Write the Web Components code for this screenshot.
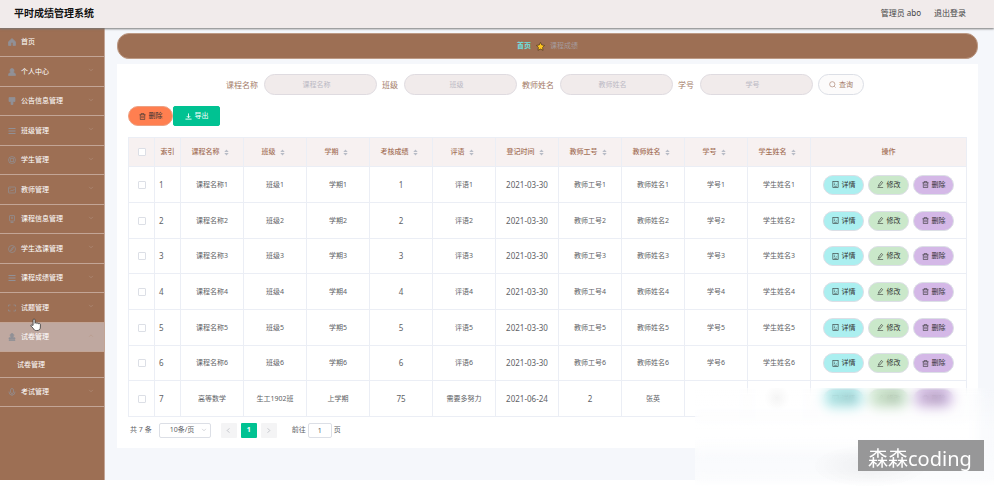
<!DOCTYPE html>
<html lang="zh-CN">
<head>
<meta charset="utf-8">
<title>平时成绩管理系统</title>
<style>
  body { margin: 0; background: #fff; font-family: "Noto Sans", "Noto Sans CJK SC", sans-serif; font-size: 7px; line-height: 10px; color: #606266; }
</style>
</head>
<body>
<score-app></score-app>
<script>
const ICONS = {
  home: '<path fill="currentColor" d="M8 1 1 7.5V15h5v-4.500a2 2 0 0 1 4 0V15h5V7.500z"/>',
  user: '<path fill="currentColor" d="M8 1a4 4 0 0 1 4 4c0 2-1 3.500-2 4.200 3 .5 5 1.600 5 3.800v2H1v-2c0-2.200 2-3.300 5-3.800C5 8.500 4 7 4 5a4 4 0 0 1 4-4z"/>',
  brush: '<path fill="currentColor" d="M2 1h12v8H2zM6 9h4v6H6z"/>',
  menu: '<path d="M1 3h14M1 8h14M1 13h14" stroke-width="2"/>',
  help: '<circle cx="8" cy="8" r="7"/><circle cx="8" cy="8" r="3.500"/><path d="m3 3 2.500 2.500M13 3l-2.500 2.500M3 13l2.500-2.500M13 13l-2.500-2.500"/>',
  card: '<rect x="1" y="2" width="14" height="12" rx="1"/><path d="M3 5h2M4 11l3-3 2 2 4-4"/>',
  phone: '<rect x="3" y="1" width="10" height="11" rx="1"/><path d="M8 3v5M6 6h4M8 12v3M5 15h6"/>',
  compass: '<circle cx="8" cy="8" r="7"/><path d="m11 4-2 5-4 3 2-5z"/>',
  frame: '<path d="M1 5V2h4M11 2h4v3M15 11v3h-4M5 14H1v-3"/>',
  stamp: '<path fill="currentColor" d="M8 1a3.500 3.500 0 0 1 3 5.500c-.8 1-1 2-1 3h4v3H2v-3h4c0-1-.2-2-1-3A3.500 3.500 0 0 1 8 1zM2 14h12v1H2z"/>',
  mic: '<rect x="5" y="1" width="6" height="10" rx="3"/><path d="M2 7v1a6 6 0 0 0 12 0V7M8 14v2"/>',
  down: '<path d="m3 5 5 5 5-5"/>',
  up: '<path d="m3 10 5-5 5 5"/>',
  left: '<path d="m10 3-5 5 5 5"/>',
  right: '<path d="m6 3 5 5-5 5"/>',
  search: '<circle cx="7.500" cy="7.500" r="6"/><path d="m12 12 3 3"/>',
  trash: '<path d="M1 4h14M5 4V1h6v3M3 4v11h10V4M6.500 7v5M9.500 7v5"/>',
  download: '<path d="M8 1v9M4 7l4 4 4-4M1 14h14" stroke-width="2"/>',
  doc: '<rect x="2" y="1" width="12" height="14"/><path d="M5 5h2M5 8h2M5 12h6M10 8h1"/>',
  edit: '<path d="m4 9 6-8 3 2.500-6 7.500-4 1zM1 15h13"/>',
  star: '<path fill="#ffc61e" stroke="#4a3420" stroke-width="1.200" d="M8 .8 10.300 5.300 15.300 6.100 11.700 9.700 12.500 14.800 8 12.500 3.500 14.800 4.300 9.700 .7 6.100 5.700 5.300z"/>',
  sort: '<path fill="currentColor" stroke="none" d="m8 1 5 6H3zM8 15l5-6H3z"/>',
  hand: '<path fill="#fff" stroke="#333" stroke-width="1" d="M5 9V2.500a1.200 1.200 0 0 1 2.400 0V6.500a1.200 1.200 0 0 1 2.300.3 1.200 1.200 0 0 1 2.200.4 1.200 1.200 0 0 1 2.100.8V11c0 3-1.500 4.500-4.500 4.500-2.500 0-3.500-1-4.500-3L2.500 10c-.6-1.200.8-2 1.700-1z"/>'
};

function define(name, render) {
  customElements.define(name, class extends HTMLElement {
    connectedCallback() {
      if (this.shadowRoot) return;
      const t = document.createElement('template');
      t.innerHTML = render(this);
      this.attachShadow({ mode: 'open' }).append(t.content.cloneNode(true));
    }
  });
}

define('ui-icon', el => `
  <style>:host{display:inline-flex;width:8px;height:8px;flex:none}svg{width:100%;height:100%}</style>
  <svg viewBox="0 0 16 16" fill="none" stroke="currentColor" stroke-width="1.400" aria-hidden="true">${ICONS[el.getAttribute('name')]}</svg>`);

define('app-header', () => `
  <style>
    :host{display:flex;align-items:center;justify-content:space-between;height:28px;padding:0 28px 3px 14px;box-sizing:border-box;background:#f1ebeb;box-shadow:0 1px 2px #777;position:relative;z-index:1}
    h1{margin:0;font-size:10px;line-height:16px;font-weight:700;color:#111}
    div{display:flex;gap:13px;font-size:8px;line-height:12px;color:#444}
    a{color:inherit;text-decoration:none}
  </style>
  <h1>平时成绩管理系统</h1><div><span>管理员 abo</span><a href="#logout">退出登录</a></div>`);

define('nav-item', el => `
  <style>
    :host{display:block;height:29px;box-sizing:border-box;border-bottom:1px solid #c3a596}
    :host(:nth-of-type(even)){height:30px}
    :host([active]){background:#bfa8a0}
    :host([sub]){height:26px}
    a{display:flex;align-items:center;height:100%;gap:5px;padding:0 10px 0 8px;color:#fff;text-decoration:none}
    :host([sub]) a{padding-left:17px}
    span{flex:1}
    ui-icon{color:#919096}
    .arrow{width:6px;height:6px;color:#b69584;margin-bottom:3px}
  </style>
  <a href="#menu">${el.hasAttribute('icon') ? `<ui-icon name="${el.getAttribute('icon')}"></ui-icon>` : ''}<span><slot></slot></span>
  ${el.hasAttribute('arrow') ? `<ui-icon class="arrow" name="${el.getAttribute('arrow')}"></ui-icon>` : ''}</a>`);

define('side-nav', () => `
  <style>
    :host{display:block;width:105px;flex:none;box-sizing:border-box;background:#9d6f54;border-right:1px solid #c3a596;position:relative}
    .pointer{position:absolute;left:29px;top:290px;width:13px;height:13px}
  </style>
  <nav>
    <nav-item icon="home">首页</nav-item>
    <nav-item icon="user" arrow="down">个人中心</nav-item>
    <nav-item icon="brush" arrow="down">公告信息管理</nav-item>
    <nav-item icon="menu" arrow="down">班级管理</nav-item>
    <nav-item icon="help" arrow="down">学生管理</nav-item>
    <nav-item icon="card" arrow="down">教师管理</nav-item>
    <nav-item icon="phone" arrow="down">课程信息管理</nav-item>
    <nav-item icon="compass" arrow="down">学生选课管理</nav-item>
    <nav-item icon="menu" arrow="down">课程成绩管理</nav-item>
    <nav-item icon="frame" arrow="down">试题管理</nav-item>
    <nav-item icon="stamp" arrow="up" active>试卷管理</nav-item>
    <nav-item sub>试卷管理</nav-item>
    <nav-item icon="mic" arrow="down">考试管理</nav-item>
  </nav>
  <ui-icon class="pointer" name="hand"></ui-icon>`);

define('bread-crumb', () => `
  <style>
    :host{display:flex;align-items:center;justify-content:center;gap:5px;height:26px;box-sizing:border-box;border:1px solid #bd9a85;border-radius:12px;background:#9d6f54;color:#a59b9d}
    a{color:#6ee0e0;font-weight:700;text-decoration:none}
    ui-icon{width:9px;height:9px}
  </style>
  <a href="#home">首页</a><ui-icon name="star"></ui-icon><span>课程成绩</span>`);

define('search-field', el => `
  <style>
    :host{display:flex;align-items:center;gap:6px}
    label{font-size:8px;line-height:12px;color:#a47c68}
    input{width:113px;height:21px;box-sizing:border-box;border:1px solid #dfdbe0;border-radius:11px;background:#f1ebeb;font:inherit;text-align:center;padding:0 12px 0 4px;outline:0}
    input::placeholder{color:#bbb9c4}
  </style>
  <label for="q">${el.getAttribute('label')}</label><input id="q" type="text" placeholder="${el.getAttribute('label')}">`);

define('icon-button', el => `
  <style>
    :host{display:inline-flex}
    button{display:flex;align-items:center;justify-content:center;gap:3px;height:20px;width:41px;box-sizing:border-box;padding:0;border:1px solid #dcdfe6;border-radius:10px;font:inherit;color:#333;background:#fff}
    ui-icon{width:7px;height:7px}
    :host([kind=find]) button{width:46px;height:21px;border-radius:11px;background:#fcfbfb;color:#a47c68}
    :host([kind=remove]) button{width:45px;border-color:#eda183;background:#ff7f50}
    :host([kind=export]) button{width:47px;border-color:#00c292;border-radius:2px;background:#00c292;color:#fff}
    :host([kind=detail]) button{background:#abeff0}
    :host([kind=edit]) button{background:#cae8ca}
    :host([kind=drop]) button{background:#d4b8e7}
  </style>
  <button type="button"><ui-icon name="${el.getAttribute('icon')}"></ui-icon><slot></slot></button>`);

define('search-bar', () => `
  <style>form{display:flex;justify-content:center;gap:5px;padding-right:5px}</style>
  <form>
    <search-field label="课程名称"></search-field><search-field label="班级"></search-field>
    <search-field label="教师姓名"></search-field><search-field label="学号"></search-field>
    <icon-button kind="find" icon="search">查询</icon-button>
  </form>`);

const HEADS = ['课程名称', '班级', '学期', '考核成绩', '评语', '登记时间', '教师工号', '教师姓名', '学号', '学生姓名'];
const ROWS = [1, 2, 3, 4, 5, 6].map(n => ['课程名称' + n, '班级' + n, '学期' + n, '' + n, '评语' + n, '2021-03-30', '教师工号' + n, '教师姓名' + n, '学号' + n, '学生姓名' + n]);
ROWS.push(['高等数学', '生工1902班', '上学期', '75', '需要多努力', '2021-06-24', '2', '张英', '', '']);
const cell = v => `<td${/^[\d-]+$/.test(v) ? ' class="num"' : ''}>${v}</td>`;

define('score-table', () => `
  <style>
    :host{display:block}
    table{width:100%;table-layout:fixed;border-collapse:separate;border-spacing:0;border:solid #ebeef5;border-width:1px 0 0 1px}
    th,td{padding:0;box-sizing:border-box;border:solid #ebeef5;border-width:0 1px 1px 0;text-align:center;white-space:nowrap}
    th{height:29px;background:#f7f1f1;color:#a47058;font-weight:500}
    td{height:36px}
    tr:nth-child(3n) td{height:35px}
    .slim{width:26px}.ops{width:156px}
    .num{font-size:8px}
    .index{text-align:left;padding-left:4px}
    input{appearance:none;display:block;width:8px;height:8px;margin:0 auto;box-sizing:border-box;border:1px solid #dcdfe6;border-radius:1px;background:#fff}
    .sort{padding:0 3px 0 0;border:0;background:none;font:inherit;color:inherit;display:inline-flex;align-items:center;gap:3px}
    .sort ui-icon{width:7px;height:7px;color:#b8bcc6}
    .buttons{display:flex;justify-content:center;gap:4px}
  </style>
  <table>
    <thead><tr><th class="slim"><input type="checkbox" aria-label="全选"></th><th class="slim">索引</th>
      ${HEADS.map(h => `<th><button class="sort" type="button">${h}<ui-icon name="sort"></ui-icon></button></th>`).join('')}
      <th class="ops">操作</th></tr></thead>
    <tbody>${ROWS.map((r, i) => `<tr><td><input type="checkbox" aria-label="选择第${i + 1}行"></td><td class="num index">${i + 1}</td>${r.map(cell).join('')}
      <td><div class="buttons"><icon-button kind="detail" icon="doc">详情</icon-button><icon-button kind="edit" icon="edit">修改</icon-button><icon-button kind="drop" icon="trash">删除</icon-button></div></td></tr>`).join('')}</tbody>
  </table>`);

define('page-bar', () => `
  <style>
    :host{display:flex;align-items:center;padding:0 2px;height:16px}
    .size{position:relative;display:flex;align-items:center;margin:0 10px 0 7px}
    select{appearance:none;width:52px;height:15px;box-sizing:border-box;padding:0 0 0 10px;border:1px solid #dcdfe6;border-radius:2px;background:#fff;font:inherit;color:inherit}
    .size ui-icon{position:absolute;right:4px;width:6px;height:6px;color:#b0b4bc}
    .pages{display:flex;gap:4px;margin-right:15px}
    button{display:flex;align-items:center;justify-content:center;width:16px;height:15px;padding:0;border:0;border-radius:1px;background:#f4f4f5;color:#a4a8b0;font:inherit;font-weight:700}
    button ui-icon{width:7px;height:7px}
    .on{background:#00c292;color:#fff}
    label{display:flex;align-items:center;gap:2px}
    input{width:24px;height:15px;box-sizing:border-box;border:1px solid #dcdfe6;border-radius:2px;padding:0;text-align:center;font:inherit;color:inherit}
  </style>
  <span>共 7 条</span>
  <div class="size"><select aria-label="每页条数"><option>10条/页</option></select><ui-icon name="down"></ui-icon></div>
  <div class="pages"><button type="button" aria-label="上一页"><ui-icon name="left"></ui-icon></button><button class="on" type="button">1</button><button type="button" aria-label="下一页"><ui-icon name="right"></ui-icon></button></div>
  <label>前往<input type="text" value="1">页</label>`);

define('frosted-corner', () => `
  <style>
    :host{position:absolute;right:0;bottom:0;width:299px;height:98px;z-index:2;overflow:hidden;backdrop-filter:blur(6px);
      background:radial-gradient(ellipse 60px 22px at 175px 78px,#0000000c,#0000),radial-gradient(circle 13px at 82px 10px,#0000000a,#0000),linear-gradient(#ffffff00,#ffffff66 40%,#ffffff80)}
    div{position:absolute;right:10px;bottom:15px;width:126px;height:31px;box-sizing:border-box;padding:4px 0 0 10px;background:#979798;color:#fff;font-size:20px;line-height:30px;white-space:nowrap}
  </style>
  <div>森森coding</div>`);

define('score-app', () => `
  <style>
    :host{display:flex;flex-direction:column;min-height:100vh;box-sizing:border-box;padding-bottom:6px;position:relative}
    .body{display:flex;flex:1;background:#f5f7fb}
    main{flex:1;min-width:0;padding:5px 16px 30px 12px}
    section{margin-top:5px;padding:10px 11px;background:#fff}
    .actions{display:flex;margin:11px 0}
    page-bar{margin-top:5px}
  </style>
  <app-header></app-header>
  <div class="body">
    <side-nav></side-nav>
    <main>
      <bread-crumb></bread-crumb>
      <section>
        <search-bar></search-bar>
        <div class="actions"><icon-button kind="remove" icon="trash">删除</icon-button><icon-button kind="export" icon="download">导出</icon-button></div>
        <score-table></score-table>
        <page-bar></page-bar>
      </section>
    </main>
  </div>
  <frosted-corner></frosted-corner>`);
</script>
</body>
</html>
